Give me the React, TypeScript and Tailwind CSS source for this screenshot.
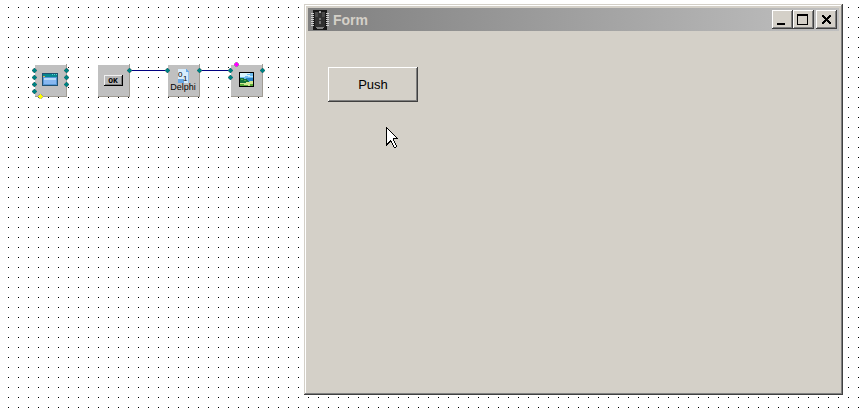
import type { ReactNode } from "react";

type Pin = { x: number; y: number; color?: string };

type BlockProps = {
  className: string;
  pins: Pin[];
  children: ReactNode;
};

function Block({ className, pins, children }: BlockProps) {
  return (
    <svg viewBox="0 0 40 40" shapeRendering="crispEdges" className={`absolute h-10 w-10 ${className}`}>
      <rect x="4" y="4" width="32" height="32" fill="#c0c0c0" />
      <path d="M35 3h1v33H4v-1h31z" fill="#a09c94" />
      {children}
      {pins.map((p) => (
        <g key={`${p.x}-${p.y}`} transform={`translate(${p.x} ${p.y})`}>
          <path d="M-1-2h3v1h1v3h-1v1h-3v-1h-1v-3h1z" fill="#808080" opacity="0.6" />
          <path d="M0-2h1v1h1v1h1v1h-1v1h-1v1h-1v-1h-1v-1h-1v-1h1v-1h1z" fill={p.color ?? "#008080"} />
          <path d="M-1-1h3v3h-3z" fill={p.color ?? "#008080"} />
        </g>
      ))}
    </svg>
  );
}

function FormIcon() {
  return (
    <g>
      <path d="M11 12h16v13H11z" fill="#205070" />
      <path d="M12 13h14v3H12z" fill="#088890" />
      <path d="M21 13h1v1h-1zM23 13h1v1h-1zM25 13h1v1h-1z" fill="#60d0d0" />
      <path d="M12 15h2v1h-2z" fill="#e0b050" />
      <path d="M12 16h14v8H12z" fill="#5898d8" />
      <path d="M13 17h12v6H13z" fill="#88b8f0" />
      <path d="M13 17h12v2H13z" fill="#b8dcfc" />
    </g>
  );
}

function OkIcon() {
  return (
    <g>
      <path d="M10 14h19v11H10z" fill="#000" />
      <path d="M10 14h18v10H10z" fill="#f0f0f0" />
      <path d="M11 15h17v9H11z" fill="#808080" />
      <path d="M11 15h16v8H11z" fill="#b8b8b8" />
      <text x="19" y="22" textAnchor="middle" className="font-['Liberation_Mono',monospace] text-[8px] font-bold">
        OK
      </text>
    </g>
  );
}

function DelphiIcon() {
  return (
    <g>
      <path d="M14 8h8l3 3v11H14z" fill="#d8ecfc" />
      <path d="M22 8v3h3zM14 18h6v4h-6z" fill="#68a8e8" />
      <path d="M24 11h1v11h-1z" fill="#90c0f0" />
      <text x="14" y="16" className="font-['Liberation_Sans',sans-serif] text-[8px]">0</text>
      <text x="19" y="20" className="font-['Liberation_Sans',sans-serif] text-[8px]">1</text>
      <text x="19" y="29" textAnchor="middle" className="font-['Liberation_Sans',sans-serif] text-[9px]">
        Delphi
      </text>
    </g>
  );
}

function PictureIcon() {
  return (
    <g>
      <path d="M12 11h15v15H12z" fill="#000" />
      <path d="M13 12h13v13H13z" fill="#70bcf0" />
      <path d="M13 12h10v1h-3v1h3v1h-5v1h-5z" fill="#d8f4fc" />
      <path d="M21 15h5v1h-5z" fill="#b8e4fc" />
      <path d="M19 17h7v3h-7z" fill="#2880c8" />
      <path d="M13 17h4v1h3v1h1v1h1v1h-2v1h-7z" fill="#107038" />
      <path d="M14 18h2v1h-2zM17 19h2v1h-2z" fill="#50a848" />
      <path d="M13 22h6v-1h4v-1h3v5H13z" fill="#d0e890" />
      <path d="M13 23h4v1h4v1h-8zM23 23h3v2h-3z" fill="#58a838" />
    </g>
  );
}

function ChipIcon() {
  return (
    <svg viewBox="0 0 18 20" shapeRendering="crispEdges" className="h-5 w-[18px]">
      <path d="M2 0h14v20H2z" fill="#181818" />
      <path d="M4 2h10v15H4z" fill="#303030" />
      <path d="M4 2h3v5H4zM11 2h3v5h-3z" fill="#484848" />
      <path d="M8 1h2v2H8z" fill="#a0a0a0" />
      <path d="M8 8h2v2H8zM8 11h2v3H8z" fill="#707070" />
      <path
        d="M0 3h3v1H0zM0 5h3v1H0zM0 7h3v1H0zM0 9h3v1H0zM0 11h3v1H0zM0 13h3v1H0zM0 15h3v1H0zM15 3h3v1h-3zM15 5h3v1h-3zM15 7h3v1h-3zM15 9h3v1h-3zM15 11h3v1h-3zM15 13h3v1h-3zM15 15h3v1h-3z"
        fill="#d0d0d0"
      />
      <path d="M5 17h8v1h-1v1H6v-1H5z" fill="#808080" />
    </svg>
  );
}

function CaptionButton({ label, path }: { label: string; path: string }) {
  return (
    <button
      aria-label={label}
      className="h-[19px] w-[21px] bg-[#d4d0c8] shadow-[inset_-1px_-1px_0_#404040,inset_1px_1px_0_#fff,inset_-2px_-2px_0_#808080]"
    >
      <svg viewBox="0 0 21 19" shapeRendering="crispEdges" className="h-[19px] w-[21px]">
        <path d={path} />
      </svg>
    </button>
  );
}

function FormWindow() {
  return (
    <section className="absolute top-1 right-[19px] left-[304px] h-[391px] bg-[#d4d0c8] p-1 shadow-[inset_-1px_-1px_0_#404040,inset_1px_1px_0_#d4d0c8,inset_-2px_-2px_0_#808080,inset_2px_2px_0_#fff]">
      <header className="flex h-[23px] items-center bg-linear-to-r from-[#808080] to-[#c0c0c0] pr-0.5 pl-[3px]">
        <ChipIcon />
        <h1 className="ml-1 flex-1 text-sm font-bold text-[#d4d0c8]">Form</h1>
        <CaptionButton label="Minimize" path="M5 13h8v2H5z" />
        <CaptionButton label="Maximize" path="M4 4h11v11H4zM5 6v8h9V6z" />
        <div className="ml-0.5 flex">
          <CaptionButton
            label="Close"
            path="M6 5h2v1H6zM13 5h2v1h-2zM6 6h3v1H6zM12 6h3v1h-3zM7 7h3v1H7zM11 7h3v1h-3zM8 8h5v1H8zM9 9h3v1H9zM8 10h5v1H8zM7 11h3v1H7zM11 11h3v1h-3zM6 12h3v1H6zM12 12h3v1h-3zM6 13h2v1H6zM13 13h2v1h-2z"
          />
        </div>
      </header>
      <div className="px-5 pt-9">
        <button className="block h-[35px] w-[90px] bg-[#d4d0c8] text-[13px] text-black shadow-[inset_-1px_-1px_0_#404040,inset_1px_1px_0_#fff,inset_-2px_-2px_0_#808080]">
          Push
        </button>
      </div>
    </section>
  );
}

export default function App() {
  return (
    <main className="relative min-h-screen overflow-hidden bg-white font-['Liberation_Sans',Arial,sans-serif]">
      <div className="absolute inset-0 top-[7px] left-2 bg-[conic-gradient(from_270deg_at_1px_1px,#000_90deg,transparent_0)] bg-[length:10px_10px]" />

      <svg shapeRendering="crispEdges" className="absolute inset-0 h-full w-full">
        <path d="M130 70h37v1h-37zM200 70h30v1h-30z" fill="#000080" />
      </svg>

      <Block
        className="top-[61px] left-[31px]"
        pins={[
          { x: 3, y: 9 },
          { x: 3, y: 16 },
          { x: 3, y: 23 },
          { x: 3, y: 30 },
          { x: 35, y: 9 },
          { x: 35, y: 16 },
          { x: 35, y: 23 },
          { x: 9, y: 35, color: "#ffff00" },
        ]}
      >
        <FormIcon />
      </Block>
      <Block className="top-[61px] left-[94px]" pins={[{ x: 35, y: 9 }]}>
        <OkIcon />
      </Block>
      <Block
        className="top-[61px] left-[164px]"
        pins={[
          { x: 3, y: 9 },
          { x: 35, y: 9 },
        ]}
      >
        <DelphiIcon />
      </Block>
      <Block
        className="top-[61px] left-[227px]"
        pins={[
          { x: 3, y: 9 },
          { x: 3, y: 16 },
          { x: 35, y: 9 },
          { x: 9, y: 3, color: "#ff00ff" },
        ]}
      >
        <PictureIcon />
      </Block>

      <FormWindow />

      <svg viewBox="0 0 12 21" shapeRendering="crispEdges" className="absolute top-[127px] left-[386px] h-[21px] w-3">
        <path d="M0 0h1v1h1v1h1v1h1v1h1v1h1v1h1v1h1v1h1v1h1v1h1v1h1v1H8v2h1v2h1v2h1v2h-1v1H8v-1H7v-2H6v-2H5v-1H4v1H3v1H2v1H1v1H0z" />
        <path
          d="M1 2h1v1h1v1h1v1h1v1h1v1h1v1h1v1h1v1h1v1H7v3h1v2h1v2h1v2H8v-2H7v-2H6v-2H5v-1H4v1H3v1H2v1H1z"
          fill="#fff"
        />
      </svg>
    </main>
  );
}
